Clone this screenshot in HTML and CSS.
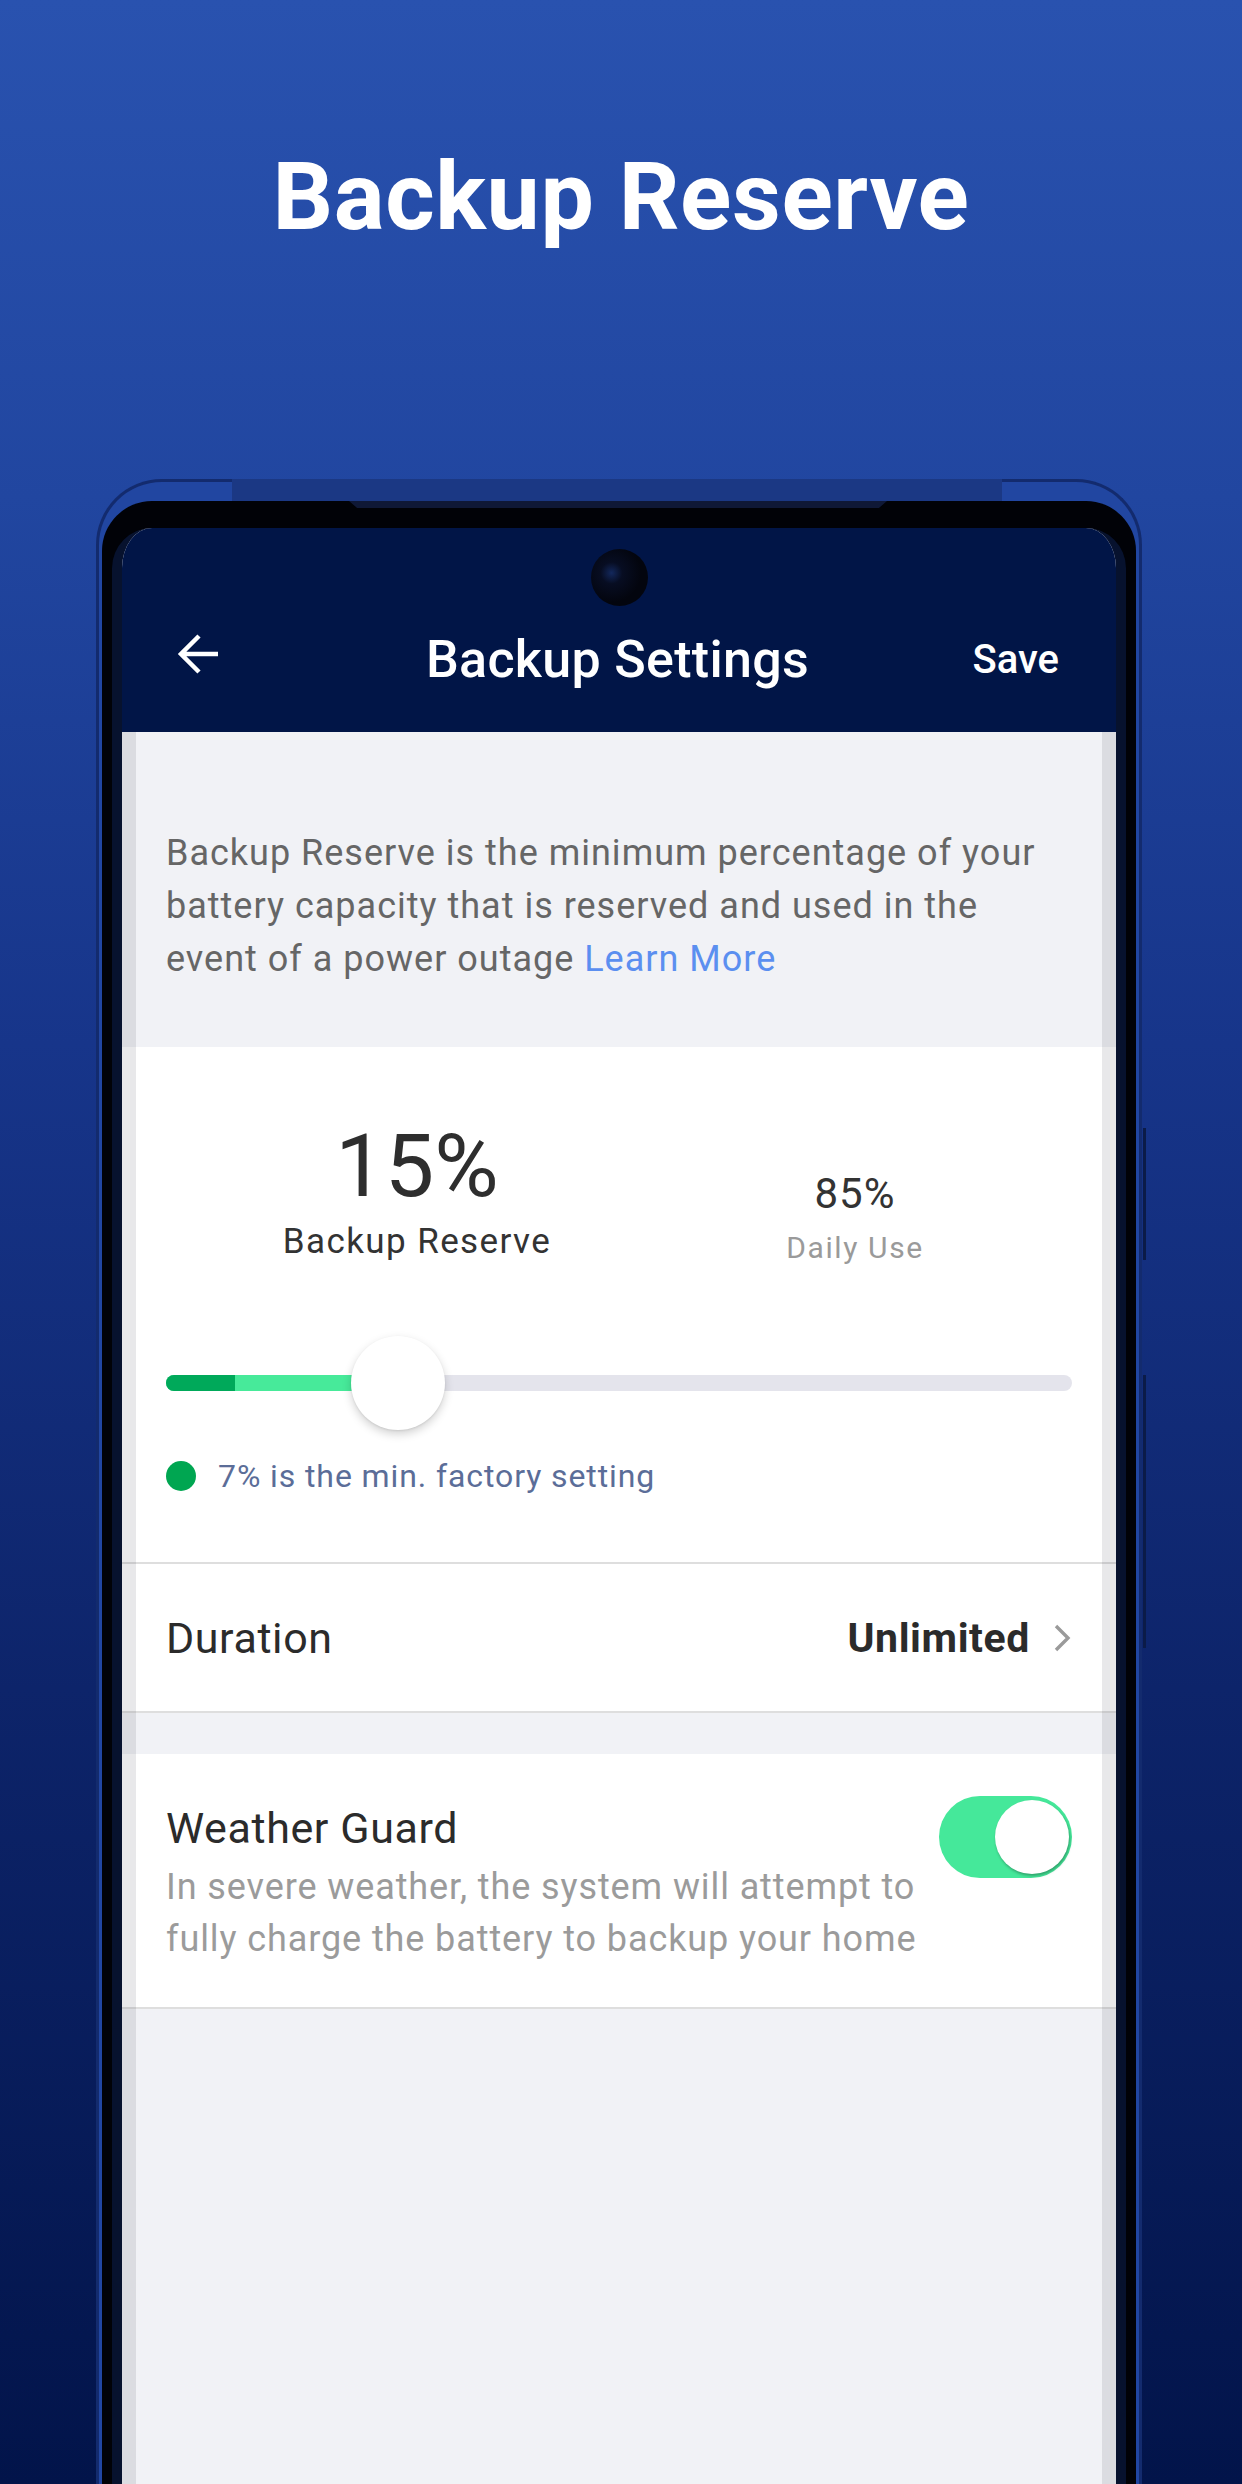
FILE: index.html
```html
<!DOCTYPE html>
<html lang="en">
<head>
    <meta charset="UTF-8">
    <meta name="viewport" content="width=device-width, initial-scale=1.0">
    <title>Backup Reserve</title>
    <link rel="stylesheet" href="styles.css">
</head>
<body>

<div class="page">
    <h1 class="headline">Backup Reserve</h1>

    <div class="phone">
        <span class="side-key key-upper"></span>
        <span class="side-key key-lower"></span>

        <div class="bezel">
            <div class="screen">

                <div class="app-bar">
                    <span class="camera"></span>
                    <div class="app-bar-row">
                        <svg class="back" width="42" height="42" viewBox="0 0 42 42">
                            <path d="M42 21H5 M23 3 L5 21 L23 39" fill="none" stroke="#fff" stroke-width="4.5"/>
                        </svg>
                        <div class="app-title">Backup Settings</div>
                        <div class="save">Save</div>
                    </div>
                </div>

                <div class="intro">
                    <span>Backup Reserve is the minimum percentage of your battery capacity that is reserved and used in the event of a power outage</span>
                    <span class="link">Learn More</span>
                </div>

                <section class="reserve-card">
                    <div class="stats">
                        <div class="stat">
                            <div class="stat-big">15%</div>
                            <div class="stat-label">Backup Reserve</div>
                        </div>
                        <div class="stat stat-side">
                            <div class="stat-small">85%</div>
                            <div class="stat-caption">Daily Use</div>
                        </div>
                    </div>

                    <div class="slider">
                        <div class="track">
                            <div class="fill" style="width: 25.6%"></div>
                            <div class="fill-min" style="width: 7.6%"></div>
                        </div>
                        <span class="thumb" style="left: 25.6%"></span>
                    </div>

                    <div class="hint">
                        <span class="hint-dot"></span>
                        <span>7% is the min. factory setting</span>
                    </div>
                </section>

                <div class="row duration">
                    <span class="row-label">Duration</span>
                    <span class="row-value">Unlimited</span>
                    <svg class="chevron" width="20" height="30" viewBox="0 0 20 30">
                        <path d="M4 3 L16 15 L4 27" fill="none" stroke="#9a9a9a" stroke-width="3.4"/>
                    </svg>
                </div>

                <div class="row weather">
                    <div class="weather-text">
                        <div class="row-label">Weather Guard</div>
                        <div class="weather-desc">In severe weather, the system will attempt to fully charge the battery to backup your home</div>
                    </div>
                    <span class="toggle"><span class="knob"></span></span>
                </div>

            </div>
        </div>
    </div>
</div>

</body>
</html>
```

FILE: styles.css
```css
* {
    box-sizing: border-box;
}

html, body {
    margin: 0;
}

body {
    font-family: Roboto, "Noto Sans", Arial, sans-serif;
    color: #333;
}

.page {
    width: 1242px;
    height: 2484px;
    overflow: hidden;
    padding-top: 142px;
    background: linear-gradient(180deg, #2952af 0%, #2146a0 20%, #17358a 42%, #0d246a 68%, #02144a 100%);
}

.headline {
    margin: 0;
    text-align: center;
    color: #fff;
    font-size: 95px;
    line-height: 110px;
    font-weight: 700;
    letter-spacing: 0.6px;
}

/* phone frame */

.phone {
    position: relative;
    width: 1046px;
    height: 2020px;
    margin: 227px 0 0 96px;
    padding: 19px 3px 0;
    border: 3px solid #132b6e;
    border-bottom: 0;
    border-radius: 66px 66px 0 0;
    background: #2146a1;
}

.phone::before {
    content: "";
    position: absolute;
    top: -3px;
    left: 133px;
    width: 770px;
    height: 22px;
    background: #1b3884;
}

.phone::after {
    content: "";
    position: absolute;
    top: 19px;
    left: 250px;
    width: 538px;
    height: 7px;
    background: #0f1836;
    clip-path: polygon(0 0, 100% 0, 98.5% 100%, 1.5% 100%);
}

.side-key {
    position: absolute;
    right: -7px;
    width: 3px;
    background: #0b1b48;
}

.key-upper {
    top: 646px;
    height: 132px;
}

.key-lower {
    top: 893px;
    height: 273px;
}

.bezel {
    height: 100%;
    padding: 27px 10px 0;
    background: #010207;
    border-radius: 50px 50px 0 0;
}

.screen {
    position: relative;
    height: 100%;
    overflow: hidden;
    background: #f1f2f6;
    border: 10px solid #07122e;
    border-top: 0;
    border-bottom: 0;
    border-radius: 40px 40px 0 0;
}

.screen::before,
.screen::after {
    content: "";
    position: absolute;
    top: 204px;
    bottom: 0;
    width: 14px;
    background: rgba(0, 0, 20, 0.09);
}

.screen::before {
    left: 0;
}

.screen::after {
    right: 0;
}

/* app bar */

.app-bar {
    position: relative;
    padding: 88px 57px 28px 54px;
    background: #011547;
}

.camera {
    position: absolute;
    top: 21px;
    left: 50%;
    width: 57px;
    height: 57px;
    margin-left: -28.5px;
    border-radius: 50%;
    background: radial-gradient(circle at 36% 42%, #13285c 0, #070d22 22%, #03050e 60%);
}

.app-bar-row {
    display: grid;
    grid-template-columns: 1fr auto 1fr;
    align-items: center;
    height: 88px;
    color: #fff;
}

.back {
    display: block;
    margin-bottom: 12px;
}

.app-title {
    font-size: 52px;
    line-height: 88px;
    font-weight: 500;
    letter-spacing: 0.3px;
}

.save {
    justify-self: end;
    font-size: 40px;
    line-height: 88px;
    font-weight: 500;
}

/* intro */

.intro {
    padding: 95px 50px 61px 44px;
    font-size: 36px;
    line-height: 53px;
    color: #666;
    letter-spacing: 1px;
}

.link {
    color: #5b8ff0;
}

/* reserve card */

.reserve-card {
    padding: 75px 44px 68px;
    background: #fff;
    border-bottom: 2px solid #dedede;
}

.stats {
    display: grid;
    grid-template-columns: 502px 374px;
    align-items: start;
    text-align: center;
}

.stat-big {
    font-size: 88px;
    line-height: 88px;
    color: #2e2e2e;
}

.stat-label {
    margin-top: 12px;
    font-size: 35px;
    line-height: 40px;
    letter-spacing: 1.4px;
    color: #333;
}

.stat-side {
    padding-top: 47px;
}

.stat-small {
    font-size: 42px;
    line-height: 50px;
    letter-spacing: 1px;
    color: #333;
}

.stat-caption {
    margin-top: 11px;
    font-size: 30px;
    line-height: 36px;
    letter-spacing: 1.6px;
    color: #9a9a9a;
}

.slider {
    position: relative;
    display: flex;
    align-items: center;
    height: 94px;
    margin-top: 70px;
}

.track {
    position: relative;
    width: 100%;
    height: 16px;
    border-radius: 8px;
    overflow: hidden;
    background: #e4e4ec;
}

.fill,
.fill-min {
    position: absolute;
    top: 0;
    left: 0;
    height: 100%;
}

.fill {
    background: #47ea9a;
}

.fill-min {
    background: #00a95a;
}

.thumb {
    position: absolute;
    top: 0;
    width: 94px;
    height: 94px;
    margin-left: -47px;
    border-radius: 50%;
    background: #fff;
    box-shadow: 0 4px 10px rgba(0, 0, 0, 0.18), 0 1px 2px rgba(0, 0, 0, 0.08);
}

.hint {
    display: flex;
    align-items: center;
    gap: 22px;
    margin-top: 28px;
    font-size: 32px;
    line-height: 36px;
    letter-spacing: 0.9px;
    color: #5b6d98;
}

.hint-dot {
    width: 30px;
    height: 30px;
    border-radius: 50%;
    background: #00a651;
}

/* rows */

.row {
    display: flex;
    padding: 0 44px;
    background: #fff;
    border-bottom: 2px solid #dedede;
}

.row-label {
    font-size: 43px;
    line-height: 50px;
    letter-spacing: 0.6px;
    color: #2b2b2b;
}

.duration {
    align-items: center;
    height: 149px;
}

.row-value {
    margin-left: auto;
    font-size: 41px;
    font-weight: 700;
    letter-spacing: 0.6px;
    color: #2b2b2b;
}

.chevron {
    display: block;
    margin-left: 22px;
}

.weather {
    align-items: flex-start;
    margin-top: 41px;
    padding-top: 42px;
    padding-bottom: 42px;
}

.weather-text {
    width: 780px;
    margin-top: 7px;
}

.weather-desc {
    margin-top: 8px;
    font-size: 36px;
    line-height: 52px;
    letter-spacing: 0.9px;
    color: #9b9b9b;
}

.toggle {
    display: flex;
    justify-content: flex-end;
    align-items: center;
    width: 134px;
    height: 82px;
    margin-left: auto;
    padding: 0 3px;
    border-radius: 41px;
    background: #45e89a;
}

.knob {
    width: 74px;
    height: 74px;
    border-radius: 50%;
    background: #fff;
    box-shadow: 1px 2px 3px rgba(0, 0, 0, 0.3);
}
```
